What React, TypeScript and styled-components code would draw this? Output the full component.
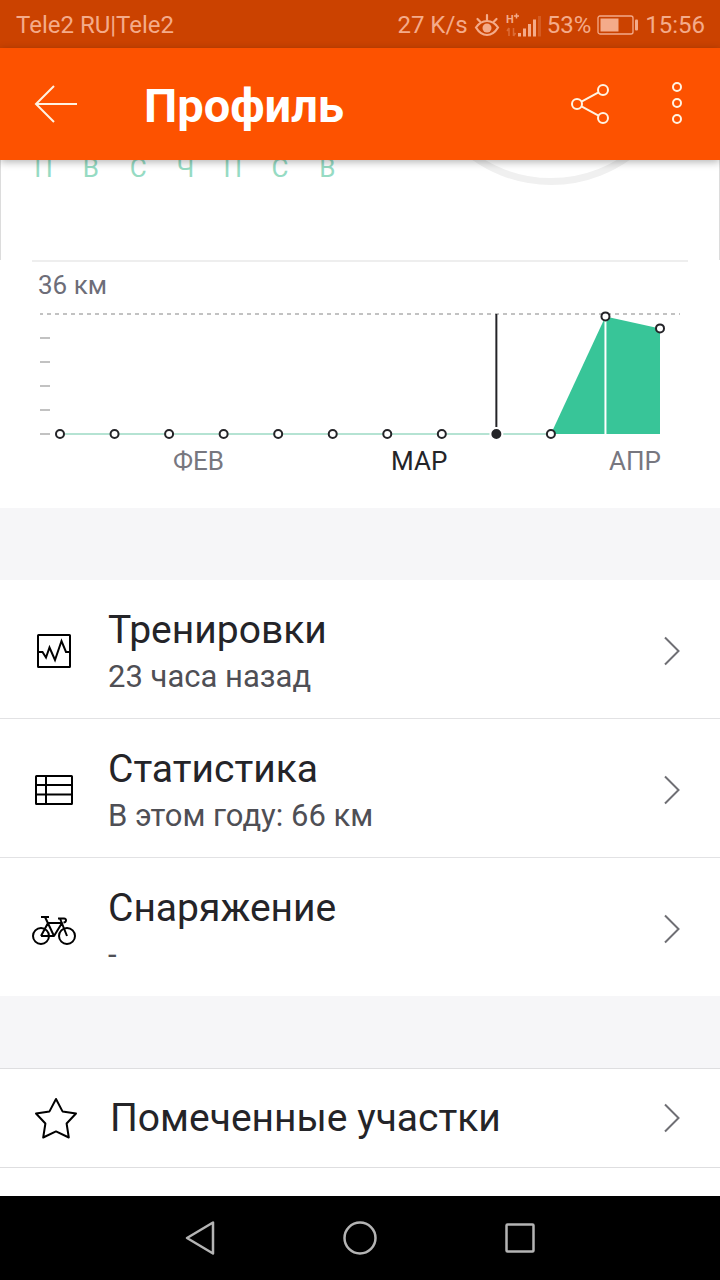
import React from "react";
import styled, { createGlobalStyle } from "styled-components";

const GlobalStyle = createGlobalStyle`
  *, *::before, *::after { box-sizing: border-box; }
  body {
    margin: 0;
    background: #fff;
    font-family: Roboto, "Noto Sans", sans-serif;
    color: #242428;
  }
`;

const Screen = styled.div`
  display: flex;
  flex-direction: column;
  min-height: 100vh;
`;

const StatusBar = styled.div`
  display: flex;
  justify-content: space-between;
  align-items: center;
  height: 48px;
  padding: 2px 15px 0 16px;
  background: #cb4200;
  color: #f4ab8a;
  font-size: 24px;
  line-height: 28px;
  white-space: nowrap;
`;

const StatusGroup = styled.div`
  display: flex;
  align-items: center;
  gap: 6px;
`;

const AppBar = styled.header`
  position: relative;
  z-index: 1;
  display: flex;
  align-items: center;
  height: 112px;
  padding: 0 20px 0 32px;
  background: #fd5200;
  color: #fff;
  box-shadow: 0 2px 8px rgba(0, 0, 0, 0.3);
`;

const IconButton = styled.button`
  display: flex;
  align-items: center;
  justify-content: center;
  padding: 0;
  border: 0;
  background: none;
  color: inherit;
  cursor: pointer;
`;

const Title = styled.h1`
  flex: 1;
  margin: 0 0 0 62px;
  padding: 4px 0 0 2px;
  font-size: 47px;
  line-height: 56px;
  font-weight: 700;
`;

const Actions = styled.div`
  display: flex;
  gap: 38px;
  color: #fff3e2;
`;

const Content = styled.main`
  flex: 1;
  background: #fff;
`;

const Summary = styled.section`
  display: flex;
  justify-content: space-between;
  align-items: flex-end;
  height: 100px;
  padding: 0 32px 0 19px;
  overflow: hidden;
  border: solid #dcdcdc;
  border-width: 0 1px;
`;

const Weekdays = styled.div`
  display: grid;
  grid-template-columns: repeat(7, 1fr);
  flex: 0 0 331px;
  margin-bottom: 76px;
  color: #96dbc3;
  font-size: 26px;
  line-height: 32px;
  text-align: center;
`;

const GoalRing = styled.div`
  flex: none;
  width: 272px;
  height: 272px;
  margin-bottom: 75px;
  border: 7px solid #f0f0f0;
  border-radius: 50%;
`;

const ChartPanel = styled.section`
  margin: 0 32px;
  padding: 7px 0 26px;
  border-top: 2px solid #eee;
`;

const ChartTotal = styled.div`
  margin-bottom: 3px;
  padding-left: 6px;
  color: #6d6d78;
  font-size: 26px;
  line-height: 32px;
`;

const ChartSvg = styled.svg`
  display: block;
  width: 100%;
  height: auto;
`;

const Month = styled.text<{ $active?: boolean }>`
  font-size: 26px;
  fill: ${(p) => (p.$active ? "#242428" : "#77777f")};
`;

const Spacer = styled.div`
  height: 72px;
  background: #f6f6f8;
`;

const List = styled.ul<{ $ruled?: boolean }>`
  margin: 0;
  padding: 0;
  list-style: none;
  border: solid #dedee0;
  border-width: ${(p) => (p.$ruled ? "1px 0" : "0")};
`;

const Item = styled.li`
  & + & {
    border-top: 1px solid #e2e2e4;
  }
`;

const RowText = styled.div`
  flex: 1;
`;

const Row = styled.a<{ $single?: boolean }>`
  display: flex;
  align-items: center;
  height: ${(p) => (p.$single ? "98px" : "138px")};
  padding: ${(p) => (p.$single ? "0 40px 0 30px" : "3px 40px 0 30px")};
  color: inherit;
  text-decoration: none;

  ${RowText} {
    padding: ${(p) => (p.$single ? "0 0 0 32px" : "5px 0 0 30px")};
  }
`;

const RowTitle = styled.div`
  font-size: 39px;
  line-height: 48px;
`;

const RowNote = styled.div`
  color: #4f4f55;
  font-size: 31px;
  line-height: 46px;
`;

const NavBar = styled.nav`
  display: flex;
  justify-content: center;
  align-items: center;
  gap: 112px;
  height: 84px;
  background: #000;
  color: #b4b4b4;
`;

const EyeIcon = () => (
  <svg width="26" height="26" viewBox="0 0 26 26" fill="none" stroke="currentColor" strokeWidth="2.200" strokeLinecap="round">
    <path d="M2 15.500C5 11 9 9 13 9S21 11 24 15.500C21 20.500 17 23 13 23S5 20.500 2 15.500Z" />
    <path d="M13 8V3M6 9.500L3.500 7M20 9.500L22.500 7" />
    <circle cx="13" cy="16" r="4.500" fill="currentColor" stroke="none" />
  </svg>
);

const SignalIcon = () => (
  <svg width="35" height="26" viewBox="0 0 35 26" fill="currentColor">
    <text x="0" y="11" fontSize="11" fontWeight="700">H</text>
    <path d="M10.500 1.500v5M8 4h5" stroke="currentColor" strokeWidth="1.500" />
    <path d="M3 16v8M3 16l-2 3M7.500 24v-8M7.500 24l2-3" stroke="currentColor" strokeWidth="1.500" opacity="0.4" />
    <path d="M12 21h3v3.500h-3zM17 16.500h3v8h-3zM22 12h3v12.500h-3zM27 7.500h3v17h-3z" />
    <path d="M32 4h3v20.500h-3z" opacity="0.25" />
  </svg>
);

const BatteryIcon = () => (
  <svg width="42" height="20" viewBox="0 0 42 20">
    <rect x="1" y="1" width="35" height="18" rx="2" fill="none" stroke="currentColor" strokeWidth="1.300" />
    <rect x="3.500" y="3.500" width="18" height="13" fill="currentColor" />
    <rect x="38" y="4.500" width="3" height="11" rx="1" fill="currentColor" />
  </svg>
);

const BackIcon = () => (
  <svg width="48" height="48" viewBox="0 0 48 48" fill="none" stroke="#fff3e2" strokeWidth="2">
    <path d="M22 6L4 24L22 42M4 24H45" />
  </svg>
);

const ShareIcon = () => (
  <svg width="48" height="48" viewBox="0 0 48 48" fill="none" stroke="currentColor" strokeWidth="2">
    <circle cx="11" cy="24" r="5" />
    <circle cx="37" cy="10" r="5" />
    <circle cx="37" cy="38" r="5" />
    <path d="M15.500 21.600L32.500 12.400M15.500 26.400L32.500 35.600" />
  </svg>
);

const MoreIcon = () => (
  <svg width="48" height="48" viewBox="0 0 48 48" fill="none" stroke="currentColor" strokeWidth="2">
    <circle cx="25" cy="7" r="4" />
    <circle cx="25" cy="23" r="4" />
    <circle cx="25" cy="39" r="4" />
  </svg>
);

const RowGlyph = styled.svg.attrs({ viewBox: "0 0 48 48", width: 48, height: 48 })`
  flex: none;
  fill: none;
  stroke: #000;
  stroke-width: 2px;
  stroke-linejoin: round;
`;

const WorkoutsIcon = () => (
  <RowGlyph>
    <rect x="8" y="8" width="32" height="32" rx="0.500" />
    <path d="M8 25H12.500L16 30.500L19.500 20.500L25 33L31.500 14L36 25H40" strokeLinejoin="miter" />
  </RowGlyph>
);

const StatsIcon = () => (
  <RowGlyph>
    <rect x="6" y="10" width="36" height="28" rx="0.500" />
    <path d="M16 10V38M6 19H42M6 28.500H42" />
  </RowGlyph>
);

const BikeIcon = () => (
  <RowGlyph>
    <circle cx="11" cy="31" r="8" />
    <circle cx="37" cy="31" r="8" />
    <path d="M11 31L18 18H32L24 31H11M15 12L24 31M11 12H19M37 31L30 13.500M28 13.500H34C37 13.500 36.500 17.500 33.500 17.500" />
  </RowGlyph>
);

const StarIcon = () => (
  <RowGlyph>
    <path d="M26 5L32.500 17.400L46 19.500L36.600 29.500L38.800 43.500L26 37.400L13.200 43.500L15.400 29.500L6 19.500L19.500 17.400Z" />
  </RowGlyph>
);

const Chevron = () => (
  <svg width="24" height="32" viewBox="0 0 24 32" fill="none" stroke="#6f6f74" strokeWidth="2">
    <path d="M9 2.500L22.500 16L9 29.500" />
  </svg>
);

// Weekly distance as a share of the top gridline.
const weeks = [0, 0, 0, 0, 0, 0, 0, 0, 0, 0, 0.98, 0.88];
const selectedWeek = 8;
const base = 130;
const span = 120;
const px = (i: number) => 28 + (i * 600) / 11;
const py = (v: number) => base - v * span;

const Chart = () => (
  <ChartSvg viewBox="0 0 656 178" role="img" aria-label="36 км">
    <path d="M8 10H648" stroke="#c2c2c2" strokeWidth="2" strokeDasharray="4 4" strokeDashoffset="1" />
    {[34, 58, 82, 106, 130].map((y) => (
      <path key={y} d={`M8 ${y}H18`} stroke="#c2c2c2" strokeWidth="2" />
    ))}
    <path d={`M${px(0)} ${base}H${px(9)}`} stroke="#b5e3d3" strokeWidth="2" />
    <path
      d={`M${px(9)} ${base}L${px(10)} ${py(weeks[10])}L${px(11)} ${py(weeks[11])}V${base}Z`}
      fill="#38c598"
    />
    <path d={`M${px(10)} ${py(weeks[10])}V${base}`} stroke="#fff" strokeWidth="2" />
    <path d={`M${px(selectedWeek)} 10V123`} stroke="#242428" strokeWidth="2" />
    {weeks.map((v, i) =>
      i === selectedWeek ? (
        <circle key={i} cx={px(i)} cy={py(v)} r="6" fill="#242428" stroke="#fff" strokeWidth="2" />
      ) : (
        <circle key={i} cx={px(i)} cy={py(v)} r="4" fill="#fff" stroke="#242428" strokeWidth="2" />
      )
    )}
    <Month x="141" y="166">ФЕВ</Month>
    <Month x="359" y="166" $active>МАР</Month>
    <Month x="577" y="166">АПР</Month>
  </ChartSvg>
);

const activity = [
  { title: "Тренировки", note: "23 часа назад", Icon: WorkoutsIcon },
  { title: "Статистика", note: "В этом году: 66 км", Icon: StatsIcon },
  { title: "Снаряжение", note: "-", Icon: BikeIcon },
];

export default function App() {
  return (
    <Screen>
      <GlobalStyle />
      <StatusBar>
        <span>Tele2 RU|Tele2</span>
        <StatusGroup>
          <span>27 K/s</span>
          <EyeIcon />
          <SignalIcon />
          <span>53%</span>
          <BatteryIcon />
          <span>15:56</span>
        </StatusGroup>
      </StatusBar>
      <AppBar>
        <IconButton aria-label="Назад"><BackIcon /></IconButton>
        <Title>Профиль</Title>
        <Actions>
          <IconButton aria-label="Поделиться"><ShareIcon /></IconButton>
          <IconButton aria-label="Ещё"><MoreIcon /></IconButton>
        </Actions>
      </AppBar>
      <Content>
        <Summary>
          <Weekdays>
            {["П", "В", "С", "Ч", "П", "С", "В"].map((d, i) => (
              <span key={i}>{d}</span>
            ))}
          </Weekdays>
          <GoalRing />
        </Summary>
        <ChartPanel>
          <ChartTotal>36 км</ChartTotal>
          <Chart />
        </ChartPanel>
        <Spacer />
        <List>
          {activity.map(({ title, note, Icon }) => (
            <Item key={title}>
              <Row href="#">
                <Icon />
                <RowText>
                  <RowTitle>{title}</RowTitle>
                  <RowNote>{note}</RowNote>
                </RowText>
                <Chevron />
              </Row>
            </Item>
          ))}
        </List>
        <Spacer />
        <List $ruled>
          <Item>
            <Row href="#" $single>
              <StarIcon />
              <RowText>
                <RowTitle>Помеченные участки</RowTitle>
              </RowText>
              <Chevron />
            </Row>
          </Item>
        </List>
      </Content>
      <NavBar>
        <IconButton aria-label="Назад">
          <svg width="48" height="48" viewBox="0 0 48 48" fill="none" stroke="currentColor" strokeWidth="2.500" strokeLinejoin="round">
            <path d="M11 24L37 8.500V39.500Z" />
          </svg>
        </IconButton>
        <IconButton aria-label="Домой">
          <svg width="48" height="48" viewBox="0 0 48 48" fill="none" stroke="currentColor" strokeWidth="2.500">
            <circle cx="24" cy="24" r="15.500" />
          </svg>
        </IconButton>
        <IconButton aria-label="Недавние">
          <svg width="48" height="48" viewBox="0 0 48 48" fill="none" stroke="currentColor" strokeWidth="2.500">
            <rect x="10.500" y="10.500" width="27" height="27" rx="1" />
          </svg>
        </IconButton>
      </NavBar>
    </Screen>
  );
}
